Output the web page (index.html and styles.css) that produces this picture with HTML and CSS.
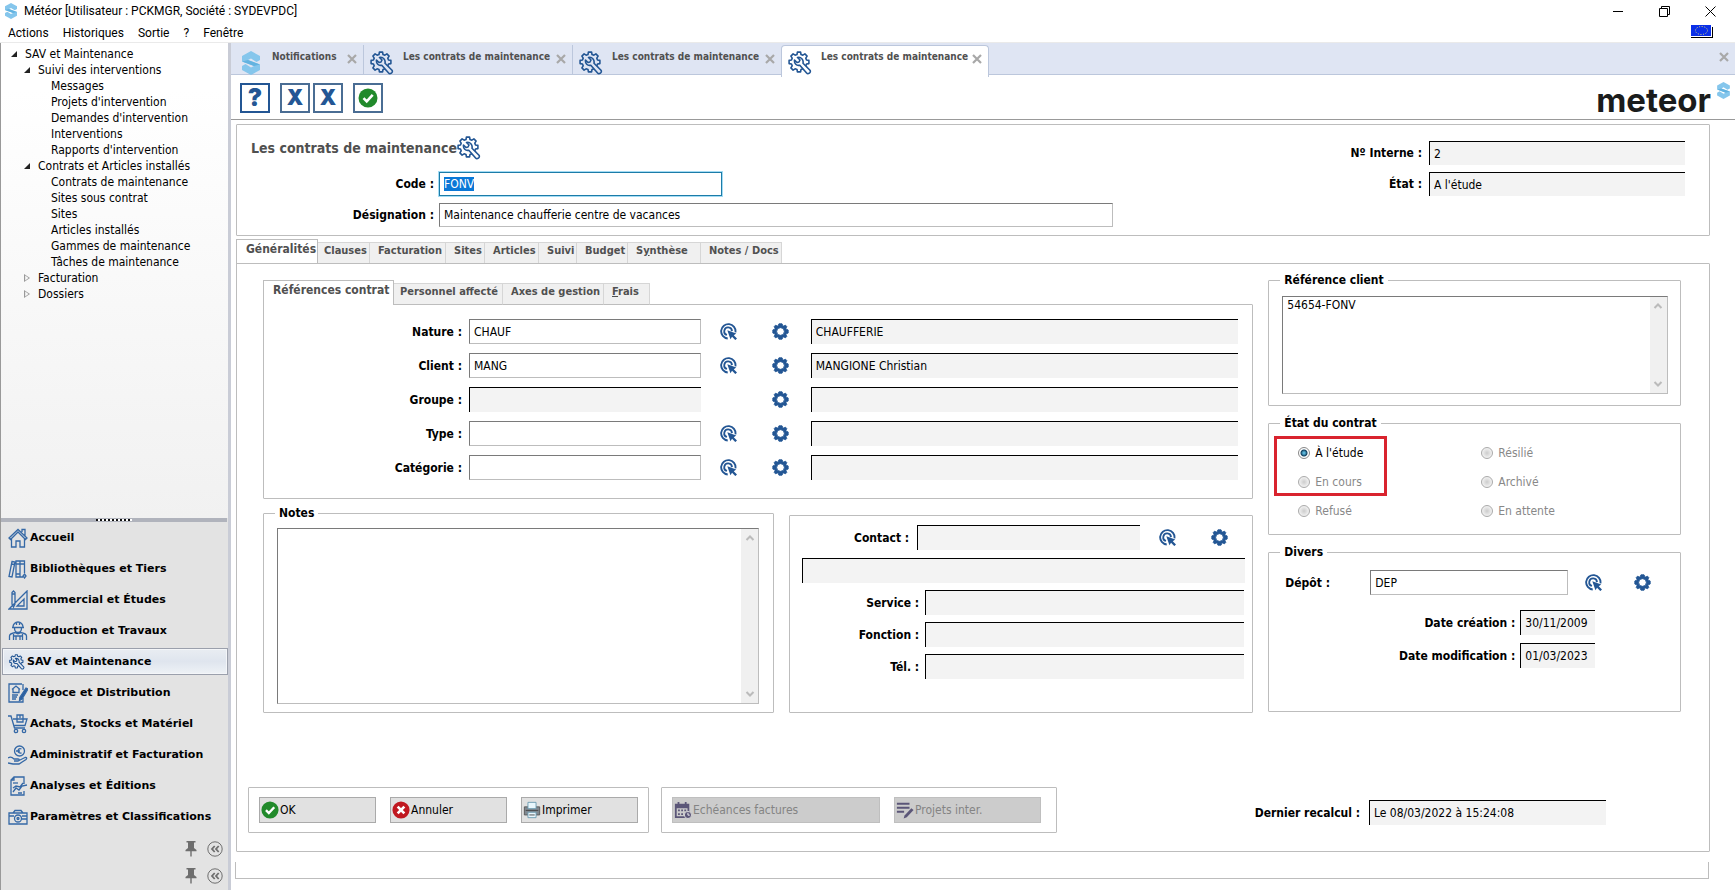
FILE: index.html
```html
<!DOCTYPE html>
<html lang="fr">
<head>
<meta charset="utf-8">
<title>Météor</title>
<link rel="stylesheet" href="styles.css">
</head>
<body>
<svg class="defs" aria-hidden="true">
  <symbol id="logo" viewBox="0 0 20 24"><path fill="#85c6ec" d="M10 0 19 5V9L15.500 11 10 7.500 7 9 19 13.500V19L10 24 1 19V15L4.500 13 10 16.500 13 15 1 10.500V5Z"/><path fill="#63b3e0" d="M1 10.500 7 9l12 4.500-6 1.500Z"/></symbol>
  <symbol id="tool" viewBox="0 0 24 24"><g fill="none" stroke="currentColor" stroke-width="1.600" stroke-linejoin="round"><path d="M18.5 9 20.9 9.4V12.6L18.5 13 17.8 14.9 19.1 16.9 16.9 19.1 14.9 17.8 13 18.5 12.6 20.9H9.4L9 18.5 7.1 17.8 5.1 19.1 2.9 16.9 4.2 14.9 3.5 13 1.1 12.6V9.4L3.5 9 4.2 7.1 2.9 5.1 5.1 2.9 7.1 4.2 9 3.5 9.4 1.1H12.6L13 3.5 14.9 4.2 16.9 2.9 19.1 5.1 17.8 7.1Z"/><path fill="var(--under, #fff)" d="M9.500 6.500 12 9 11 11 9 11.500 6.500 9C6 12.500 8.500 15 11.800 14.200L18.600 22C20 23.500 23.500 21.500 22 19.300L15 12.200C15.800 9 13 5.500 9.500 6.500Z"/></g></symbol>
  <symbol id="gear" viewBox="0 0 22 22"><path fill="currentColor" stroke="currentColor" stroke-width="1.200" stroke-linejoin="round" fill-rule="evenodd" d="M18.500 8 20.900 9V13L18.500 14 18 15 19.100 17.500 17.500 19.100 15 18 14 18.500 13 20.900H9L8 18.500 7 18 4.500 19.100 2.900 17.500 4 15 3.500 14 1.100 13V9L3.500 8 4 7 2.900 4.500 4.500 2.900 7 4 8 3.500 9 1.100H13L14 3.500 15 4 17.500 2.900 19.100 4.500 18 7ZM11 6a5 5 0 1 0 0 10 5 5 0 0 0 0-10Z"/></symbol>
  <symbol id="pick" viewBox="0 0 22 22"><g fill="none" stroke="currentColor" stroke-width="2.400"><path d="M20 12A9.300 9.300 0 1 0 10 20"/><path d="M15.500 10.500A5 5 0 1 0 9 15.500"/></g><path fill="currentColor" d="m9.500 9.500 11.500 4-3.200 2.200 4.200 4.200-2.200 2.200-4.200-4.200-2.100 3.200Z"/></symbol>
  <symbol id="close" viewBox="0 0 10 10"><path d="m1 1 8 8M9 1 1 9" stroke="#a8a8a8" stroke-width="2.200"/></symbol>
  <symbol id="ok" viewBox="0 0 20 20"><circle cx="10" cy="10" r="9.500" fill="#218a2b"/><path d="m5.500 10.200 3.200 3.200 6-6.500" fill="none" stroke="#fff" stroke-width="2.600"/></symbol>
  <symbol id="ko" viewBox="0 0 20 20"><circle cx="10" cy="10" r="9.500" fill="#c01820"/><path d="m6.300 6.300 7.400 7.400m0-7.400-7.400 7.400" fill="none" stroke="#fff" stroke-width="3"/></symbol>
  <symbol id="up" viewBox="0 0 10 10"><path d="m1.500 7 3.500-3.500L8.500 7" fill="none" stroke="#bbb" stroke-width="2"/></symbol>
  <symbol id="down" viewBox="0 0 10 10"><path d="m1.500 3 3.500 3.500L8.500 3" fill="none" stroke="#bbb" stroke-width="2"/></symbol>
  <symbol id="pin" viewBox="0 0 12 16"><path fill="#6e6e6e" d="M1.500 0h9v1.500H9V7l2.500 2v1.300H6.700V15L6 16l-.7-1v-4.700H.5V9L3 7V1.500H1.500Z"/></symbol>
  <symbol id="collapse" viewBox="0 0 16 16"><circle cx="8" cy="8" r="7.200" fill="none" stroke="#6e6e6e"/><path d="M7.700 5 5 8l2.700 3M11.700 5 9 8l2.700 3" fill="none" stroke="#6e6e6e" stroke-width="1.800"/></symbol>
</svg>

<div class="app">
  <header class="titlebar">
    <svg class="app-logo"><use href="#logo"/></svg>
    <span class="app-title">Météor [Utilisateur : PCKMGR, Société : SYDEVPDC]</span>
    <div class="window-buttons">
      <button aria-label="Réduire"><svg viewBox="0 0 11 11"><path d="M0 5.500h10" stroke="#000"/></svg></button>
      <button aria-label="Restaurer"><svg viewBox="0 0 11 11"><path d="M.5 2.500h8v8h-8ZM2.500 2.500v-2h8v8h-2" fill="none" stroke="#000"/></svg></button>
      <button aria-label="Fermer"><svg viewBox="0 0 11 11"><path d="m.5.5 10 10m0-10-10 10" stroke="#000"/></svg></button>
    </div>
  </header>
  <nav class="menubar">
    <button>Actions</button><button>Historiques</button><button>Sortie</button><button>?</button><button>Fenêtre</button>
    <svg class="flag" viewBox="0 0 22 13"><path d="M2 2h20v11H0V11h2Z"/><path fill="#fff" d="M0 0h21v12H0Z"/><path fill="#0a2fe8" d="M0 0h20v11H0Z"/><ellipse cx="10.500" cy="5.500" rx="6" ry="4" fill="none" stroke="#e9e36a" stroke-dasharray="1 1.600"/></svg>
  </nav>

  <div class="workspace">
    <aside class="sidebar">
      <ul class="tree">
        <li class="open">SAV et Maintenance</li>
        <li class="open level-1">Suivi des interventions</li>
        <li class="level-2">Messages</li>
        <li class="level-2">Projets d'intervention</li>
        <li class="level-2">Demandes d'intervention</li>
        <li class="level-2">Interventions</li>
        <li class="level-2">Rapports d'intervention</li>
        <li class="open level-1">Contrats et Articles installés</li>
        <li class="level-2">Contrats de maintenance</li>
        <li class="level-2">Sites sous contrat</li>
        <li class="level-2">Sites</li>
        <li class="level-2">Articles installés</li>
        <li class="level-2">Gammes de maintenance</li>
        <li class="level-2">Tâches de maintenance</li>
        <li class="closed level-1">Facturation</li>
        <li class="closed level-1">Dossiers</li>
      </ul>
      <div class="splitter"></div>
      <nav class="modules">
        <button><svg viewBox="0 0 20 20"><path d="M1 10 10 1.500 19 10l-1.500 1.500L10 4 2.500 11.500ZM3.500 11v8H8v-6h4v6h4.500v-8M14 4V1.500h3V8"/></svg>Accueil</button>
        <button><svg viewBox="0 0 20 20"><path d="M4 2.500 7 3 4 18l-3-.5ZM8 2h4v16H8ZM12 2h4.500v12M12 18h3M8 5h4M8 15h4M12 5h4M3.500 5l3 .5M16.500 15l1.500 2-1.500 2-1.500-2Z"/></svg>Bibliothèques et Tiers</button>
        <button><svg viewBox="0 0 20 20"><path d="M19 1v18H1L19 1ZM16 9v7H9ZM4 2.500 5.500 1 7 2.500V14l-1.500 3L4 14ZM4 4h3"/></svg>Commercial et Études</button>
        <button><svg viewBox="0 0 20 20"><path d="M5 6a5 5 0 0 1 10 0M4 6.500h12M6.500 7c0 6 7 6 7 0M8.500 1v3M11.500 1v3M1.500 19v-4c0-2 3-3 6-3.500 1.500 1.500 3.500 1.500 5 0 3 .5 6 1.500 6 3.500v4M5.500 19v-6M14.500 19v-6M6 15h8M8 15v4M12 15v4"/></svg>Production et Travaux</button>
        <button class="current"><svg viewBox="0 0 24 24"><use href="#tool"/></svg>SAV et Maintenance</button>
        <button><svg viewBox="0 0 20 20"><path d="M14 1H1v18h14v-4M15 7V1M4 6.500 8 3l4 3.500M5 6v3.500h6V6M4 12h6M4 14h5M4 16h4"/><path class="solid" d="m18 5 2 1-6 10-2.500 1.500.3-3Z"/></svg>Négoce et Distribution</button>
        <button><svg viewBox="0 0 20 20"><path d="M0 2h3l3.500 12H17M5 5h14l-2 6.500H6.500M9 1h6v7H9ZM12 1v3"/><circle cx="8" cy="17" r="1.700"/><circle cx="16" cy="17" r="1.700"/></svg>Achats, Stocks et Matériel</button>
        <button><svg viewBox="0 0 20 20"><circle cx="11.500" cy="6" r="5"/><path d="M13.500 4c-4-2-5 5 0 4M8 6h4M0 13c3-2 5 0 6 1h4c2 0 1 2 0 2H6M11 15.500l6-3c2-.5 2 1 1 2l-7 4.500H5l-5-1"/></svg>Administratif et Facturation</button>
        <button><svg viewBox="0 0 20 20"><path d="M16 8V1H6L3 4v15h13v-4M6 1v3H3M5 16l3-4 3 2 3-4 5-1M5 12l3-2 4 1 3-4M10 17h4"/><path d="M5 7h5"/></svg>Analyses et Éditions</button>
        <button><svg viewBox="0 0 20 20"><path d="M1 6h18v11H1ZM5 6l2-2.500h6L15 6M1 9h5M14 9h5M14 12h5"/><circle cx="10" cy="11.500" r="3.500"/><circle cx="10" cy="11.500" r="1"/></svg>Paramètres et Classifications</button>
      </nav>
      <div class="side-tools"><svg class="pin"><use href="#pin"/></svg><svg class="collapse"><use href="#collapse"/></svg></div>
      <div class="side-tools"><svg class="pin"><use href="#pin"/></svg><svg class="collapse"><use href="#collapse"/></svg></div>
    </aside>

    <main class="main">
      <div class="doc-tabs">
        <div class="doc-tab first"><svg class="doc-icon"><use href="#logo"/></svg><span>Notifications</span><button aria-label="Fermer"><svg><use href="#close"/></svg></button></div>
        <div class="doc-tab"><svg class="doc-icon"><use href="#tool"/></svg><span>Les contrats de maintenance</span><button aria-label="Fermer"><svg><use href="#close"/></svg></button></div>
        <div class="doc-tab"><svg class="doc-icon"><use href="#tool"/></svg><span>Les contrats de maintenance</span><button aria-label="Fermer"><svg><use href="#close"/></svg></button></div>
        <div class="doc-tab active"><svg class="doc-icon"><use href="#tool"/></svg><span>Les contrats de maintenance</span><button aria-label="Fermer"><svg><use href="#close"/></svg></button></div>
        <button class="close-all" aria-label="Tout fermer"><svg><use href="#close"/></svg></button>
      </div>
      <div class="toolbar">
        <button class="help">?</button>
        <button>X</button>
        <button>X</button>
        <button class="valid" aria-label="Valider"><svg><use href="#ok"/></svg></button>
        <div class="brand">meteor<svg><use href="#logo"/></svg></div>
      </div>

      <section class="panel head">
        <div class="head-left">
          <h1>Les contrats de maintenance<svg><use href="#tool"/></svg></h1>
          <label for="code">Code :</label><input class="code" id="code" value="FONV">
          <label for="des">Désignation :</label><input id="des" value="Maintenance chaufferie centre de vacances">
        </div>
        <div class="head-right">
          <label for="num">Nº Interne :</label><input id="num" value="2" readonly>
          <label for="etat">État :</label><input id="etat" value="A l'étude" readonly>
        </div>
      </section>

      <div class="tabs outer-tabs">
        <button class="active t1">Généralités</button><button class="t2">Clauses</button><button class="t3">Facturation</button><button class="t4">Sites</button><button class="t5">Articles</button><button class="t6">Suivi</button><button class="t7">Budget</button><button class="t8">S<u>y</u>nthèse</button><button class="t9">Notes / Docs</button>
      </div>
      <section class="panel pane">
        <div class="columns">
          <div class="col-left">
            <div class="tabs inner-tabs">
              <button class="active t1">Références contrat</button><button class="t2">Personnel affecté</button><button class="t3">Axes de gestion</button><button class="t4"><u>F</u>rais</button>
            </div>
            <div class="panel refs">
              <label for="nature">Nature :</label><input id="nature" value="CHAUF"><button class="icon" aria-label="Choisir"><svg><use href="#pick"/></svg></button><button class="icon cfg" aria-label="Paramétrer"><svg><use href="#gear"/></svg></button><input aria-label="Libellé nature" value="CHAUFFERIE" readonly>
              <label for="client">Client :</label><input id="client" value="MANG"><button class="icon" aria-label="Choisir"><svg><use href="#pick"/></svg></button><button class="icon cfg" aria-label="Paramétrer"><svg><use href="#gear"/></svg></button><input aria-label="Nom du client" value="MANGIONE Christian" readonly>
              <label for="groupe">Groupe :</label><input id="groupe" readonly><span></span><button class="icon cfg" aria-label="Paramétrer"><svg><use href="#gear"/></svg></button><input aria-label="Libellé groupe" readonly>
              <label for="type">Type :</label><input id="type"><button class="icon" aria-label="Choisir"><svg><use href="#pick"/></svg></button><button class="icon cfg" aria-label="Paramétrer"><svg><use href="#gear"/></svg></button><input aria-label="Libellé type" readonly>
              <label for="cat">Catégorie :</label><input id="cat"><button class="icon" aria-label="Choisir"><svg><use href="#pick"/></svg></button><button class="icon cfg" aria-label="Paramétrer"><svg><use href="#gear"/></svg></button><input aria-label="Libellé catégorie" readonly>
            </div>
            <div class="lower">
              <fieldset class="notes"><legend>Notes</legend>
                <div class="memo"><textarea aria-label="Notes"></textarea><span class="scroll"><svg><use href="#up"/></svg><svg><use href="#down"/></svg></span></div>
              </fieldset>
              <div class="panel contact">
                <div class="contact-row"><label for="contact">Contact :</label><input id="contact" readonly><button class="icon" aria-label="Choisir"><svg><use href="#pick"/></svg></button><button class="icon" aria-label="Paramétrer"><svg><use href="#gear"/></svg></button></div>
                <input class="contact-name" aria-label="Nom du contact" readonly>
                <div class="contact-grid">
                  <label for="service">Service :</label><input id="service" readonly>
                  <label for="fonction">Fonction :</label><input id="fonction" readonly>
                  <label for="tel">Tél. :</label><input id="tel" readonly>
                </div>
              </div>
            </div>
          </div>
          <div class="col-right">
            <fieldset class="client-ref"><legend>Référence client</legend>
              <div class="memo"><textarea aria-label="Référence client">54654-FONV</textarea><span class="scroll"><svg><use href="#up"/></svg><svg><use href="#down"/></svg></span></div>
            </fieldset>
            <fieldset class="state"><legend>État du contrat</legend>
              <div class="radios">
                <label class="on"><input type="radio" name="state" checked>À l'étude</label>
                <label><input type="radio" name="state" disabled>Résilié</label>
                <label><input type="radio" name="state" disabled>En cours</label>
                <label><input type="radio" name="state" disabled>Archivé</label>
                <label><input type="radio" name="state" disabled>Refusé</label>
                <label><input type="radio" name="state" disabled>En attente</label>
              </div>
              <span class="highlight"></span>
            </fieldset>
            <fieldset class="misc"><legend>Divers</legend>
              <div class="depot"><label for="depot">Dépôt :</label><input id="depot" value="DEP"><button class="icon" aria-label="Choisir"><svg><use href="#pick"/></svg></button><button class="icon" aria-label="Paramétrer"><svg><use href="#gear"/></svg></button></div>
              <div class="dates">
                <label for="crea">Date création :</label><input id="crea" value="30/11/2009" readonly>
                <label for="modif">Date modification :</label><input id="modif" value="01/03/2023" readonly>
              </div>
            </fieldset>
          </div>
        </div>
        <div class="actions">
          <div class="panel group">
            <button><svg><use href="#ok"/></svg>OK</button>
            <button><svg><use href="#ko"/></svg>Annuler</button>
            <button><svg viewBox="0 0 20 20"><path fill="#808890" stroke="#555" d="M1.500 6.500h17v9h-17Z"/><path fill="#e8f6fc" stroke="#6a9ab0" d="M5.500 1.500h9v7h-9ZM5.500 12.500h9v6h-9Z"/><path stroke="#444" d="M3 10.500h14M7 15.500h6"/></svg>Imprimer</button>
          </div>
          <div class="panel group links">
            <button class="wide" disabled><svg viewBox="0 0 20 20"><path fill="#5b5678" fill-rule="evenodd" d="M1 3h3V1h2v2h6V1h2v2h3v16H1ZM3 8v9h12V8Z"/><path stroke="#5b5678" stroke-width="2" stroke-dasharray="2 1.500" d="M4.500 10.500h9M4.500 14.500h6"/><circle cx="15.500" cy="15.500" r="4" fill="#5b5678" stroke="#ddd"/><path d="M15.500 13v2.700h2" fill="none" stroke="#fff"/></svg>Echéances factures</button>
            <button class="mid" disabled><svg viewBox="0 0 20 20"><path d="M1 3h14M1 7.500h14M1 12h8" stroke="#5b5678" stroke-width="2.200"/><path fill="#5b5678" d="m17 8 2.500 2-7.500 8-3.500 1.500 1-3.500Z"/></svg>Projets inter.</button>
          </div>
          <div class="recalc"><label for="recalc">Dernier recalcul :</label><input id="recalc" value="Le 08/03/2022 à 15:24:08" readonly></div>
        </div>
      </section>
      <div class="tail"></div>
    </main>
  </div>
</div>
<script src="app.js"></script>
</body>
</html>
```
FILE: app.js
```js
document.getElementById('code').focus();
document.getElementById('code').select();
```
FILE: styles.css
```css
* { box-sizing: border-box; }
body {
  margin: 0;
  color: #000;
  background: #fff;
  font: 12px/16px "DejaVu Sans Condensed", "DejaVu Sans", sans-serif;
}
button, input, textarea { font: inherit; color: inherit; margin: 0; }
button { border: 0; padding: 0; background: none; }
svg { display: block; flex: none; color: #235694; }
.defs { position: absolute; width: 0; height: 0; }

.app { display: flex; flex-direction: column; min-height: 100vh; }

/* Window frame */
.titlebar { display: flex; align-items: center; height: 22px; padding: 0 19px 0 4px; font-family: Roboto, sans-serif; }
.app-logo { width: 14px; height: 16px; margin-right: 6px; }
.app-title { flex: 1; }
.window-buttons { display: flex; gap: 35px; }
.window-buttons svg { width: 11px; height: 11px; }
.menubar { display: flex; align-items: center; gap: 14px; height: 20px; padding: 2px 22px 0 8px; font-family: Roboto, sans-serif; }
.flag { width: 22px; height: 13px; margin: 0 0 4px auto; }

.workspace { display: flex; flex: 1; border-top: 1px solid #eaeaea; }

/* Sidebar */
.sidebar { display: flex; flex-direction: column; width: 231px; background: #e3e3e3; border-left: 1px solid #999; border-right: 3px solid #c9ccd6; }
.tree { flex: 1; margin: 0; padding: 3px 0 0; list-style: none; background: linear-gradient(#fff 10%, #f1f1f1); }
.tree li { display: flex; align-items: center; height: 16px; padding-left: 24px; }
.tree .level-1 { padding-left: 37px; }
.tree .level-2 { padding-left: 50px; }
.tree .open::before, .tree .closed::before { content: ""; width: 6px; height: 6px; margin: 0 8px 0 -14px; }
.tree .open::before { background: #222; clip-path: polygon(100% 0, 100% 100%, 0 100%); }
.tree .closed::before { height: 8px; background: #999; clip-path: polygon(0 0, 100% 50%, 0 100%, 0 0, 20% 20%, 20% 80%, 75% 50%, 20% 20%); }
.splitter { height: 4px; background: #b0b3bc; border-right: 1px solid #e3e3e3; }
.splitter::after { content: ""; display: block; width: 36px; height: 2px; margin: 1px auto 0; background: repeating-linear-gradient(90deg, #111 0 2px, #fff 2px 4px); }
.modules { display: flex; flex-direction: column; }
.modules button { display: flex; align-items: center; gap: 2px; height: 31px; padding-left: 7px; font: bold 11px/16px "DejaVu Sans", sans-serif; text-align: left; }
.modules svg { width: 20px; height: 20px; fill: none; stroke: #3468a6; stroke-width: 1.300; --under: #e7ecf3; }
.modules .solid { fill: #2c5f9f; }
.modules .current { height: 27px; margin: 2px 0 2px 1px; padding-left: 6px; border: 1px solid #9ba0ac; background: linear-gradient(#e9edf2, #dfe5ee 50%, #eef2f6); box-shadow: inset 0 0 0 1px #f4f6f9; }
.modules .current svg { width: 16px; height: 16px; stroke: none; }
.side-tools { display: flex; align-items: center; justify-content: flex-end; gap: 10px; height: 27px; padding: 0 5px 2px 0; }
.modules + .side-tools { height: 31px; padding-top: 4px; }
.pin { width: 12px; height: 16px; }
.collapse { width: 16px; height: 16px; }

/* Document tabs and toolbar */
.main { display: flex; flex-direction: column; flex: 1; min-width: 0; }
.doc-tabs { display: flex; height: 32px; padding-top: 2px; background: #dfe5f3; border-bottom: 1px solid #bcc7dc; }
.doc-tab { display: flex; width: 209px; padding: 6px 6px 0 6px; border-left: 1px solid #bcc7dc; color: #505050; font-size: 10px; font-weight: bold; line-height: 12px; }
.doc-tab.first { width: 132px; padding-left: 8px; border: 0; }
.doc-tab.active { height: 32px; width: 208px; margin-bottom: -1px; background: #fff; border: 1px solid #bcc7dc; border-bottom: 0; border-radius: 4px 4px 0 0; padding-top: 5px; }
.doc-tab span { flex: 1; min-width: 0; margin-left: 9px; white-space: nowrap; }
.doc-icon { width: 24px; height: 24px; --under: #dfe5f3; }
.active .doc-icon { --under: #fff; }
.doc-tab button { align-self: flex-start; padding-top: 3px; }
.doc-tab button svg, .close-all svg { width: 10px; height: 10px; }
.close-all { align-self: flex-start; margin: 7px 6px 0 auto; }
.toolbar { display: flex; align-items: center; height: 45px; padding: 2px 4px 0 9px; border-bottom: 1px solid #999; }
.toolbar button { display: grid; place-items: center; width: 30px; height: 30px; margin-right: 3px; border: 2px solid #4a6d94; color: #235694; font: 900 21px/24px Inter, sans-serif; }
.toolbar .help { margin-right: 10px; border-color: #235694; font-size: 24px; }
.toolbar .valid { margin-left: 7px; }
.toolbar .valid svg { width: 20px; height: 20px; }
.brand { display: flex; margin-left: auto; gap: 5px; padding-top: 4px; color: #1a1c1c; font: bold 33px/40px Inter, sans-serif; }
.brand svg { width: 15px; height: 17px; margin-top: 2px; }

/* Shared controls */
.panel { border: 1px solid #bdbdbd; border-radius: 1px; }
label, legend { font-weight: bold; white-space: nowrap; }
input { height: 25px; min-width: 0; width: 100%; padding: 0 4px; border: 1px solid #bdbdbd; border-top-color: #7a7a7a; border-left-color: #7a7a7a; border-radius: 0; background: #fff; outline: 0; }
input[readonly] { background: #f3f3f3; border-color: #000 transparent transparent #000; border-right: 0; border-bottom: 0; }
input::selection { background: #0a78d7; color: #fff; }
.icon { display: grid; place-items: center; height: 25px; }
.icon svg { width: 17px; height: 17px; }
fieldset { min-width: 0; margin: 0; padding: 0; border: 1px solid #bdbdbd; border-radius: 1px; }
legend { margin-left: 11px; padding: 0 4px; line-height: 16px; }
.memo { display: flex; border: 1px solid #bdbdbd; border-top-color: #7a7a7a; border-left-color: #7a7a7a; }
.memo textarea { flex: 1; min-width: 0; border: 0; padding: 0 4px; resize: none; outline: 0; background: none; }
.scroll { display: flex; flex-direction: column; justify-content: space-between; align-items: center; width: 17px; padding: 4px 0; background: #f0f0f0; }
.scroll svg { width: 10px; height: 10px; }

/* Contract header */
.head { display: flex; justify-content: space-between; margin: 4px 25px 0 5px; padding: 11px 24px 8px 14px; }
.head-left { display: grid; grid-template-columns: 188px minmax(0, 674px); row-gap: 7px; flex: 0 1 862px; align-items: center; }
h1 { display: flex; align-items: center; grid-column: 1 / 3; height: 24px; margin: 0 0 5px; color: #505050; font-size: 14px; white-space: nowrap; }
h1 svg { width: 24px; height: 24px; }
.head label, .refs label { padding-right: 4px; text-align: right; }
.head-left label { padding-right: 5px; }
.head input { height: 24px; }
.head .code { width: 42%; border: 1px solid #1c7ca8; box-shadow: 0 0 0 1px #a4dcf4; }
.head-right { display: grid; grid-template-columns: auto 256px; align-content: start; align-items: center; gap: 7px 3px; padding-top: 5px; }

/* Section tabs */
.tabs { display: flex; align-items: flex-end; height: 25px; margin-bottom: -1px; }
.tabs button { height: 22px; padding: 0 1px 5px 8px; border: 1px solid #d6d6d6; border-left: 0; border-bottom-color: #bdbdbd; background: #f0f0f0; color: #505050; font-size: 11px; font-weight: bold; line-height: 15px; text-align: left; white-space: nowrap; }
.tabs .active { height: 25px; padding: 0 0 6px 9px; border: 1px solid #bdbdbd; border-bottom: 0; background: #fff; font-size: 12px; }
.outer-tabs { margin: 3px 0 -1px 5px; }
.outer-tabs .t1 { width: 82px; }
.outer-tabs .t2 { width: 52px; padding-left: 6px; }
.outer-tabs .t3 { width: 76px; }
.outer-tabs .t4 { width: 39px; }
.outer-tabs .t5 { width: 54px; }
.outer-tabs .t6 { width: 38px; }
.outer-tabs .t7 { width: 51px; }
.outer-tabs .t8 { width: 73px; }
.outer-tabs .t9 { width: 81px; }
.inner-tabs .t1 { width: 131px; }
.inner-tabs .t2 { width: 109px; padding-left: 6px; }
.inner-tabs .t3 { width: 101px; }
.inner-tabs .t4 { width: 46px; }

/* General pane */
.pane { display: flex; flex-direction: column; flex: 1; margin: 0 25px 0 5px; padding: 8px 28px 18px 26px; }
.columns { display: grid; grid-template-columns: minmax(0, 991fr) minmax(0, 413fr); gap: 15px; }
.col-left { padding-top: 8px; }
.refs { display: grid; grid-template-columns: 205px minmax(0, 232fr) 56px 54px minmax(0, 428fr); row-gap: 9px; align-items: center; padding: 14px 14px 18px 0; }
.refs label { padding-right: 7px; }
.refs .cfg { justify-self: start; width: 48px; }
.lower { display: grid; grid-template-columns: minmax(0, 511fr) minmax(0, 464fr); gap: 15px; margin-top: 6px; }
.notes { height: 208px; }
.notes .memo { height: 176px; margin: 7px 14px 0 13px; }
.contact { margin-top: 10px; padding: 9px 7px 0 12px; }
.contact-row { display: grid; grid-template-columns: 115px minmax(0, 1fr) 54px 51px; align-items: center; }
.contact-row label { padding-right: 8px; text-align: right; }
.contact-name { display: block; margin: 8px 0 7px; }
.contact-grid { display: grid; grid-template-columns: 123px minmax(0, 1fr); row-gap: 7px; align-items: center; padding-right: 1px; }
.contact-grid label { padding-right: 6px; text-align: right; }

.col-right { display: flex; flex-direction: column; gap: 9px; }
.client-ref { height: 134px; }
.client-ref .memo { height: 98px; margin: 8px 12px 0 13px; }
.state { position: relative; height: 120px; }
.radios { display: grid; grid-template-columns: 183px 1fr; row-gap: 4px; padding: 9px 0 0 29px; }
.radios label { display: flex; align-items: center; gap: 5px; height: 25px; color: #888; font-weight: normal; }
.radios .on { color: #000; }
.radios input { width: 12px; height: 12px; padding: 0; appearance: none; border: 1px solid #aaa; border-radius: 50%; background: radial-gradient(#ccc, #f4f4f4 75%); }
.radios input:checked { border-color: #888; background: radial-gradient(#5ab4d8 0 1px, #10405f 3px, #fff 4px); }
.highlight { position: absolute; left: 5px; top: 5px; width: 113px; height: 60px; border: 3px solid #d9232e; pointer-events: none; }
.misc { height: 168px; }
.depot { display: grid; grid-template-columns: 85px minmax(0, 199fr) 51px 47px; align-items: center; margin: 10px 14px 0 16px; }
.dates { display: grid; grid-template-columns: 230px 75px; gap: 8px 5px; align-items: center; margin: 15px 0 0 16px; }
.dates label { text-align: right; }
.dates input { padding-right: 0; }

/* Bottom actions */
.actions { display: flex; align-items: flex-start; gap: 12px; margin: auto 0 0 -15px; }
.group { display: flex; gap: 14px; padding: 9px 10px; }
.group.links { padding-right: 15px; }
.group button { display: flex; align-items: center; gap: 1px; width: 117px; height: 26px; padding-left: 1px; border: 1px solid #aaa; background: #e1e1e1; }
.group .wide { width: 208px; }
.group .mid { width: 147px; }
.group button:disabled { background: #ccc; border-color: #bfbfbf; color: #848484; }
.group svg { width: 18px; height: 18px; }
.recalc { display: flex; align-items: center; gap: 9px; margin: 13px 75px 0 auto; }
.recalc input { width: 237px; }
.tail { height: 17px; margin: 10px 26px 11px 4px; border: 1px solid #bdbdbd; border-top: 0; }
```
